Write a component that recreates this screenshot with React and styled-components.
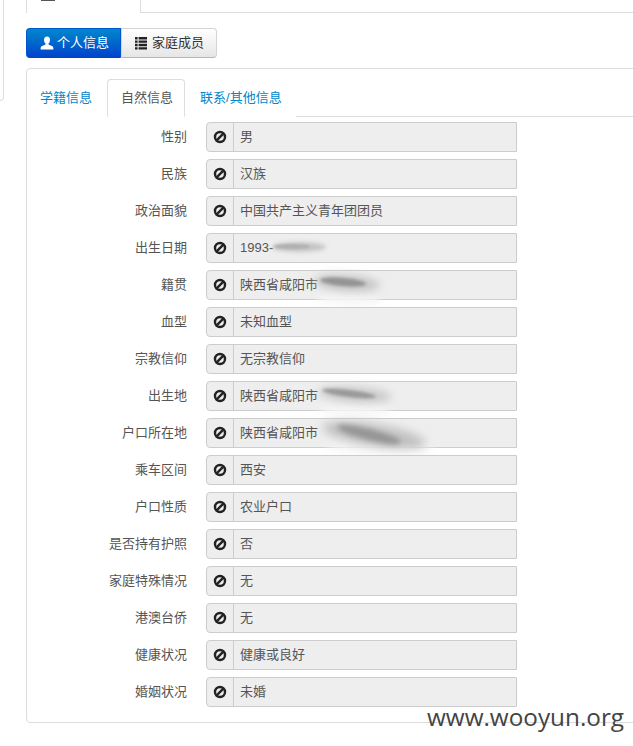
import styled, { createGlobalStyle } from "styled-components";

const rows = [
  { label: "性别", value: "男" },
  { label: "民族", value: "汉族" },
  { label: "政治面貌", value: "中国共产主义青年团团员" },
  { label: "出生日期", value: "1993-", smudge: "date" },
  { label: "籍贯", value: "陕西省咸阳市", smudge: "short" },
  { label: "血型", value: "未知血型" },
  { label: "宗教信仰", value: "无宗教信仰" },
  { label: "出生地", value: "陕西省咸阳市", smudge: "mid" },
  { label: "户口所在地", value: "陕西省咸阳市", smudge: "long" },
  { label: "乘车区间", value: "西安" },
  { label: "户口性质", value: "农业户口" },
  { label: "是否持有护照", value: "否" },
  { label: "家庭特殊情况", value: "无" },
  { label: "港澳台侨", value: "无" },
  { label: "健康状况", value: "健康或良好" },
  { label: "婚姻状况", value: "未婚" },
];

// hand-smeared patches over the private parts of the values
const smudges = {
  date: [
    { left: 66, top: 9, width: 54, height: 10, blur: 2, color: "#c4c4c4", angle: 0 },
    { left: 68, top: 11, width: 36, height: 5, blur: 1, color: "#b0b0b0", angle: 0 },
  ],
  short: [
    { left: 110, top: 25, width: 66, height: 10, blur: 3, color: "#f6f6f6", angle: 2 },
    { left: 108, top: 5, width: 66, height: 16, blur: 4, color: "#c4c4c4", angle: 4 },
    { left: 114, top: 8, width: 46, height: 8, blur: 1.5, color: "#949494", angle: 5 },
  ],
  mid: [
    { left: 112, top: 25, width: 74, height: 9, blur: 3, color: "#f6f6f6", angle: 2 },
    { left: 112, top: 6, width: 74, height: 15, blur: 4, color: "#c8c8c8", angle: 4 },
    { left: 116, top: 9, width: 54, height: 7, blur: 1.5, color: "#9a9a9a", angle: 7 },
  ],
  long: [
    { left: 118, top: 26, width: 112, height: 11, blur: 4, color: "#f6f6f6", angle: 2 },
    { left: 116, top: 6, width: 104, height: 22, blur: 5, color: "#c0c0c0", angle: 9 },
    { left: 130, top: 11, width: 66, height: 11, blur: 2.5, color: "#969696", angle: 14 },
  ],
};

const BanIcon = () => (
  <svg width="14" height="14" viewBox="0 0 14 14" fill="none" stroke="#222" strokeWidth="2.4">
    <circle cx="7" cy="7" r="5" />
    <path d="M3.4 10.6 10.6 3.4" />
  </svg>
);

const UserIcon = () => (
  <svg width="14" height="14" viewBox="0 0 14 14" fill="#fff">
    <path d="M7 0.5c-2 0-3 1.5-3 3.4 0 1.5.6 2.9 1.5 3.6v1L1.6 10.2C.8 10.6.6 11.4.6 13.5h12.8c0-2.1-.2-2.9-1-3.3L8.5 8.5v-1c.9-.7 1.5-2.1 1.5-3.6C10 2 9 .5 7 .5z" />
  </svg>
);

const ListIcon = () => (
  <svg width="14" height="14" viewBox="0 0 14 14" fill="#222">
    <path d="M1 1h2.6v2.4H1zM4.6 1H13v2.4H4.6zM1 4.4h2.6v2.4H1zM4.6 4.4H13v2.4H4.6zM1 7.8h2.6v2.4H1zM4.6 7.8H13v2.4H4.6zM1 11.2h2.6v2.4H1zM4.6 11.2H13v2.4H4.6z" />
  </svg>
);

const App = () => {
  return (
    <Page>
      <GlobalStyle />
      <SideStub />
      <Main>
        <TopTabs>
          <TopTab>
            <TopTabIcon />
          </TopTab>
        </TopTabs>
        <Pills>
          <Pill $active>
            <UserIcon />
            <PillText>个人信息</PillText>
          </Pill>
          <Pill>
            <ListIcon />
            <PillText>家庭成员</PillText>
          </Pill>
        </Pills>
        <Panel>
          <Tabs>
            <Tab>学籍信息</Tab>
            <Tab $active>自然信息</Tab>
            <Tab>联系/其他信息</Tab>
          </Tabs>
          <Form>
            {rows.map((row) => (
              <Row key={row.label}>
                <Label>{row.label}</Label>
                <Field>
                  <Addon>
                    <BanIcon />
                  </Addon>
                  <Value>{row.value}</Value>
                </Field>
                {(smudges[row.smudge] || []).map((s) => (
                  <Smudge key={s.left + "-" + s.top} $s={s} />
                ))}
              </Row>
            ))}
          </Form>
        </Panel>
      </Main>
      <Watermark>www.wooyun.org</Watermark>
    </Page>
  );
};

export default App;

const GlobalStyle = createGlobalStyle`
  html, body {
    margin: 0;
    padding: 0;
    background: #fff;
  }
  body {
    font-family: "Liberation Sans", "Noto Sans CJK SC", sans-serif;
    font-size: 13px;
    color: #555;
  }
`;

const Page = styled.div`
  position: relative;
  display: flex;
  align-items: flex-start;
  width: 633px;
  height: 746px;
  overflow: hidden;
`;

const SideStub = styled.div`
  flex-shrink: 0;
  width: 3px;
  height: 100px;
  border-right: 1px solid #ddd;
  border-bottom: 1px solid #ddd;
  border-bottom-right-radius: 4px;
`;

const Main = styled.div`
  flex-shrink: 0;
  width: 620px;
  margin-left: 22px;
`;

const TopTabs = styled.div`
  display: flex;
  height: 13px;
  box-sizing: border-box;
  border-bottom: 1px solid #ddd;
`;

const TopTab = styled.div`
  width: 115px;
  height: 13px;
  box-sizing: border-box;
  background: #fff;
  border-left: 1px solid #ddd;
  border-right: 1px solid #ddd;
  padding-left: 14px;
`;

const TopTabIcon = styled.div`
  width: 14px;
  height: 1px;
  background: #555;
`;

const Pills = styled.div`
  display: flex;
  margin-top: 15px;
`;

const Pill = styled.div`
  display: flex;
  align-items: center;
  gap: ${(p) => (p.$active ? "3px" : "4px")};
  box-sizing: border-box;
  width: ${(p) => (p.$active ? "95px" : "96px")};
  height: 30px;
  padding-left: ${(p) => (p.$active ? "13px" : "12px")};
  color: ${(p) => (p.$active ? "#fff" : "#333")};
  border: 1px solid ${(p) => (p.$active ? "#0055cc" : "#d4d4d4")};
  border-bottom-color: ${(p) => (p.$active ? "#0044cc" : "#b5b5b5")};
  border-radius: ${(p) => (p.$active ? "4px 0 0 4px" : "0 4px 4px 0")};
  background: ${(p) =>
    p.$active
      ? "linear-gradient(to bottom, #0088cc, #0044cc)"
      : "linear-gradient(to bottom, #ffffff, #e6e6e6)"};
`;

const PillText = styled.span`
  height: 28px;
  font-size: 13px;
  line-height: 27px;
`;

const Panel = styled.div`
  box-sizing: border-box;
  height: 655px;
  margin-top: 10px;
  padding-top: 10px;
  border: 1px solid #ddd;
  border-radius: 4px;
`;

const Tabs = styled.div`
  display: flex;
  height: 38px;
  box-sizing: border-box;
  border-bottom: 1px solid #ddd;
`;

const Tab = styled.div`
  box-sizing: border-box;
  height: 38px;
  padding: 0 ${(p) => (p.$active ? "11px" : "13px")} 0 13px;
  line-height: 35px;
  font-size: 13px;
  color: ${(p) => (p.$active ? "#555" : "#0088cc")};
  background: #fff;
  border: 1px solid ${(p) => (p.$active ? "#ddd" : "transparent")};
  border-bottom-color: ${(p) => (p.$active ? "#fff" : "transparent")};
  border-radius: 4px 4px 0 0;

  &:first-child {
    padding: 0 14px 0 12px;
  }

  &:last-child {
    padding-left: 14px;
  }
`;

const Form = styled.div`
  display: flex;
  flex-direction: column;
  gap: 7px;
  padding-top: 5px;
`;

const Row = styled.div`
  position: relative;
  display: flex;
  height: 30px;
`;

const Label = styled.div`
  flex-shrink: 0;
  width: 160px;
  height: 30px;
  margin-right: 19px;
  text-align: right;
  font-size: 13px;
  line-height: 29px;
  color: #555;
`;

const Field = styled.div`
  display: flex;
  box-sizing: border-box;
  width: 311px;
  height: 30px;
  background: #eee;
  border: 1px solid #ccc;
  border-radius: 4px 0 0 4px;
`;

const Addon = styled.div`
  display: flex;
  align-items: center;
  justify-content: center;
  flex-shrink: 0;
  width: 26px;
  border-right: 1px solid #ccc;
`;

const Value = styled.div`
  padding-left: 6px;
  height: 27px;
  line-height: 27px;
  font-size: 13px;
  color: #555;
`;

const Smudge = styled.div`
  position: absolute;
  left: ${(p) => p.$s.left + 179}px;
  top: ${(p) => p.$s.top}px;
  width: ${(p) => p.$s.width}px;
  height: ${(p) => p.$s.height}px;
  background: ${(p) => p.$s.color};
  filter: blur(${(p) => p.$s.blur}px);
  transform: rotate(${(p) => p.$s.angle}deg);
  border-radius: 50%;
`;

const Watermark = styled.div`
  position: absolute;
  left: 427px;
  top: 702px;
  font-family: "Open Sans", "Noto Sans", sans-serif;
  font-size: 24.3px;
  line-height: 30px;
  color: #444;
`;
